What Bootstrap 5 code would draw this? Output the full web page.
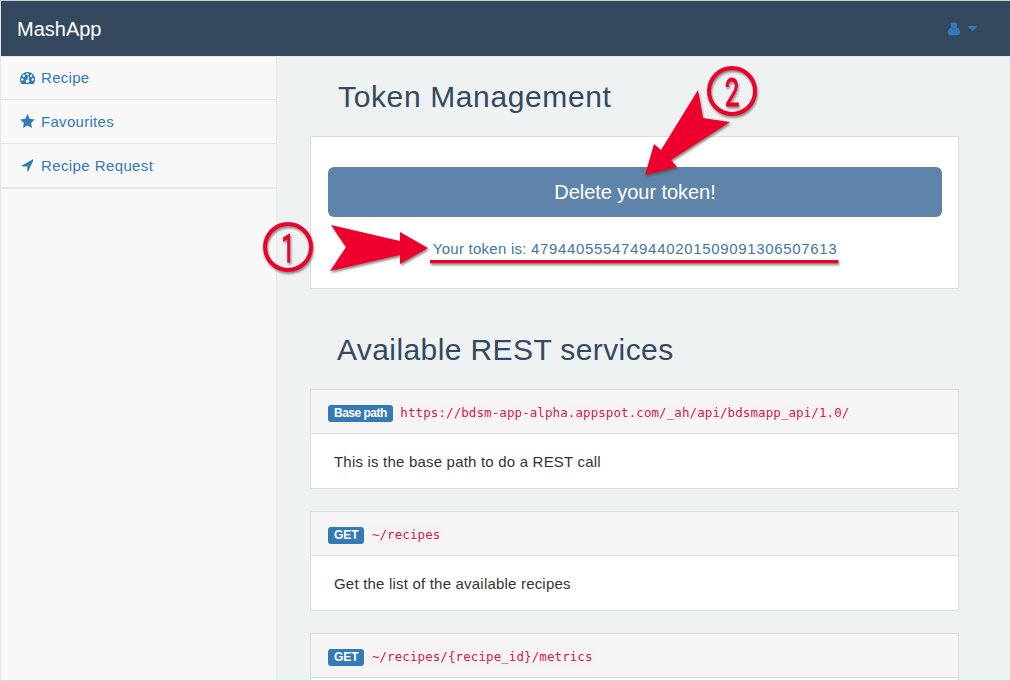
<!DOCTYPE html>
<html lang="en">
<head>
<meta charset="utf-8">
<title>MashApp</title>
<link href="https://cdn.jsdelivr.net/npm/bootstrap@5.3.0/dist/css/bootstrap.min.css" rel="stylesheet">
<style>
body{font:15px/22px "Liberation Sans",Arial,sans-serif;letter-spacing:.2px;background:#eef2f3;color:#333;height:681px;overflow:hidden;border-top:1px solid #ccd3cc;border-left:1px solid #e4e6e6}
.topbar{height:55px;background:#34495e;padding:0 33px 0 16px}
.topbar .navbar-brand{font-size:20px;letter-spacing:0;color:#fff;padding:0}
.shell{height:625px;border-bottom:1px solid #d5d7d8;border-top:1px solid #e7e7e7;overflow:hidden}
.side{width:276px;background:#f8f8f8;border-right:1px solid #e7e7e7}
.side a{height:44px;padding:0 0 0 19px;border-bottom:1px solid #e7e7e7;color:#337ab7;text-decoration:none;letter-spacing:.3px}
.side a:first-child{height:43px}
.side a:last-child{height:45px;border-bottom-width:2px;letter-spacing:.4px}
.side svg{width:15px;height:15px;margin-right:6px;fill:#337ab7}
.main-col{padding:0 51px 0 33px}
h1{font-size:30px;line-height:33px;color:#34495e;padding-left:27px;letter-spacing:.4px}
.main-col h1.first{margin:23px 0;padding-left:28px;letter-spacing:.63px}
.main-col h1.second{margin:44px 0 23px}
.panel{background:#fff;border:1px solid #ddd;border-radius:0}
.panel-head{height:44px;background:#f5f5f5;border-bottom:1px solid #ddd;padding-left:17px}
.panel-text{height:54px;padding:2px 0 0 23px}
.tag{background:#337ab7;color:#fff;font-weight:700;font-size:12px;line-height:12px;height:17px;padding:2px 6px 3px;border-radius:3px;margin-top:3px;letter-spacing:-.1px}
.tight{letter-spacing:-.5px}
code.path{font:12.5px/18px "DejaVu Sans Mono",monospace;letter-spacing:.085px;color:#c7254e;background:#f9f2f4;padding:0 4px;margin:2px 0 0 3.5px;border-radius:4px}
.btn-del,.btn-del:hover{height:50px;background:#5e84aa;color:#fff;font-size:20px;letter-spacing:-.05px;border:0;border-radius:6px;padding:0}
.token-box{height:153px;padding:30px 16px 0 17px}
.token{color:#43769c;margin-top:21px;letter-spacing:.25px}
.digits{letter-spacing:.66px}
.gapped{margin-bottom:22px}
.notes{left:0;top:0;pointer-events:none;filter:drop-shadow(1.5px 2px 1px rgba(70,65,45,.6))}
</style>
</head>
<body>
<nav class="topbar d-flex align-items-center justify-content-between">
  <a class="navbar-brand" href="#">MashApp</a>
  <a href="#" class="d-flex align-items-center" aria-label="User menu">
    <svg width="12" height="14" viewBox="0 0 12 14" fill="#337ab7"><circle cx="6" cy="3.5" r="3.2"/><path d="M2.9 5.7C1 5.8 0 8 0 10.6 0 12.300.8 13.300 2.1 13.300h7.800c1.300 0 2.100-1 2.100-2.700 0-2.600-1-4.800-2.900-4.900a4.200 4.200 0 0 1-6.200 0z"/></svg>
    <svg class="ms-2" width="9" height="5" viewBox="0 0 9 5" fill="#337ab7"><path d="M.6 0h7.8q.9.2.3.9L5 4.7q-.5.5-1 0L.3.9Q-.3.2.6 0z"/></svg>
  </a>
</nav>
<div class="shell d-flex">
  <aside class="side flex-shrink-0">
    <a href="#" class="d-flex align-items-center"><svg viewBox="0 0 15 15"><path fill-rule="evenodd" d="M7.500 1A7.500 7.500 0 0 0 0 8.500c0 1.500.4 2.800 1.100 4q.2.4.6.4h11.600q.4 0 .6-.4A7.500 7.500 0 0 0 7.500 1zM2.300 7.300a1.200 1.200 0 1 1 0 2.400 1.200 1.200 0 0 1 0-2.400zM3.900 3.600a1.200 1.200 0 1 1 0 2.400 1.200 1.200 0 0 1 0-2.400zM7.500 2a1.200 1.200 0 1 1 0 2.400 1.200 1.200 0 0 1 0-2.400zM11.100 3.600a1.200 1.200 0 1 1 0 2.400 1.200 1.200 0 0 1 0-2.400zM12.700 7.300a1.200 1.200 0 1 1 0 2.400 1.200 1.200 0 0 1 0-2.400zM8.200 5.200l1 .3-.7 3.300A1.700 1.700 0 1 1 7.400 8.500z"/></svg>Recipe</a>
    <a href="#" class="d-flex align-items-center"><svg viewBox="0 0 15 15"><path d="M7.5 0l2.200 4.700 5.100.7-3.700 3.600.9 5.100-4.500-2.500L3 14.100l.9-5.100L.2 5.400l5.100-.7z"/></svg>Favourites</a>
    <a href="#" class="d-flex align-items-center"><svg viewBox="0 0 15 15"><path d="M13 1.500q.6.200.4.800L8.300 13.300q-.6.700-1-.1V8.600H2.100q-1-.3-.2-1L12.500 1.500z"/></svg>Recipe Request</a>
  </aside>
  <main class="main-col flex-grow-1">
    <h1 class="first">Token Management</h1>
    <section class="panel token-box">
      <button class="btn btn-del w-100" type="button">Delete your token!</button>
      <p class="token text-center mb-0">Your token is: <span class="digits">4794405554749440201509091306507613</span></p>
    </section>
    <h1 class="second">Available REST services</h1>
    <section class="panel gapped"><div class="panel-head d-flex align-items-center"><span class="tag tight">Base path</span><code class="path">https://bdsm-app-alpha.appspot.com/_ah/api/bdsmapp_api/1.0/</code></div><div class="panel-text d-flex align-items-center">This is the base path to do a REST call</div></section>
    <section class="panel gapped"><div class="panel-head d-flex align-items-center"><span class="tag">GET</span><code class="path">~/recipes</code></div><div class="panel-text d-flex align-items-center">Get the list of the available recipes</div></section>
    <section class="panel gapped"><div class="panel-head d-flex align-items-center"><span class="tag">GET</span><code class="path">~/recipes/{recipe_id}/metrics</code></div><div class="panel-text"></div></section>
  </main>
</div>
<svg class="notes position-absolute" width="1010" height="681" viewBox="0 0 1010 681">
  <g fill="#ed002d">
    <path d="M331 225L400 241V232L428 248 400 264V255L330 271 346 247z"/>
    <path d="M698 90L703 118 730 122 671 160 677 167 645 175 654 144 661 150z"/>
    <path d="M430 260H838.500V263.300H430z"/>
    <g font-family="Roboto,sans-serif" font-size="39" text-anchor="middle" letter-spacing="0" stroke="#ed002d" stroke-width="1">
      <text transform="translate(288 261.500) scale(.62 1)">1</text>
      <text transform="translate(732 105.500) scale(.66 1)">2</text>
    </g>
  </g>
  <g fill="none" stroke="#ed002d" stroke-width="4"><circle cx="288" cy="247" r="23"/><circle cx="732" cy="91" r="23"/></g>
</svg>
<script src="https://cdn.jsdelivr.net/npm/bootstrap@5.3.0/dist/js/bootstrap.bundle.min.js"></script>
</body>
</html>
